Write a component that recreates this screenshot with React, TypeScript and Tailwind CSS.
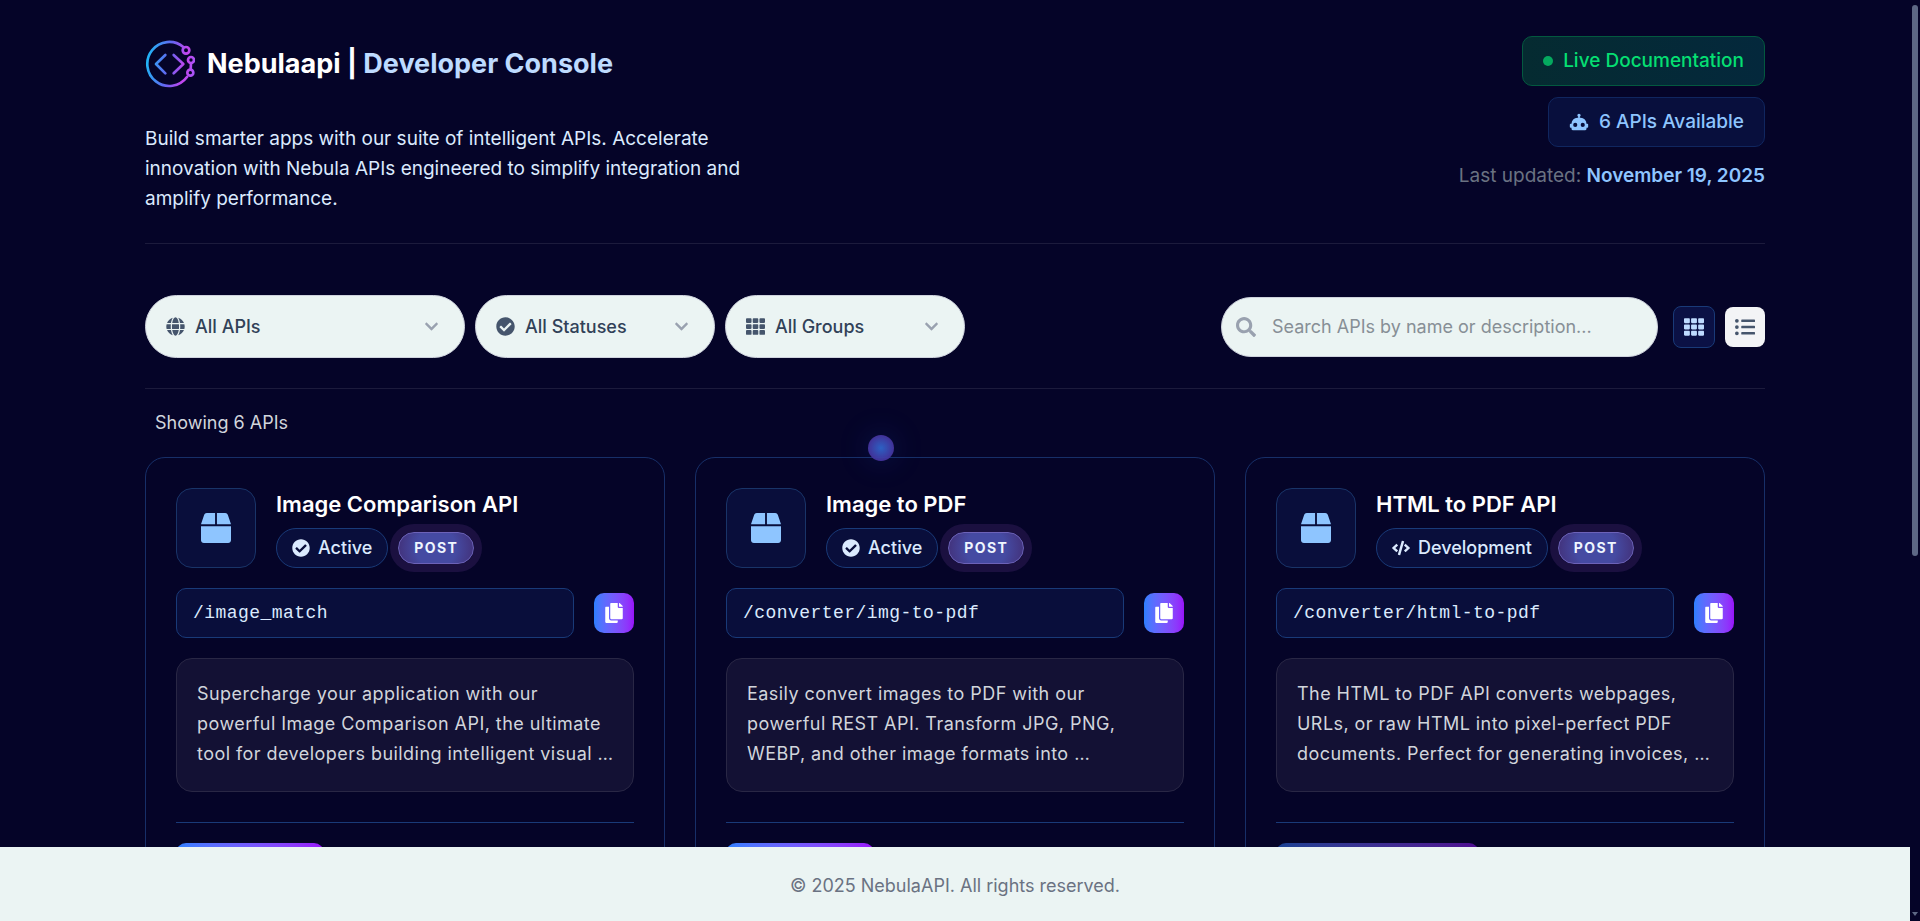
import type { IconType } from 'react-icons'
import {
  FaBox,
  FaCheckCircle,
  FaChevronDown,
  FaCode,
  FaCopy,
  FaGlobe,
  FaListUl,
  FaSearch,
  FaTh,
} from 'react-icons/fa'

type Api = {
  name: string
  status: 'Active' | 'Development'
  method: string
  endpoint: string
  description: string
}

type Filter = {
  id: string
  label: string
  icon: IconType
  width: string
}

const filters: Filter[] = [
  { id: 'api', label: 'All APIs', icon: FaGlobe, width: 'w-80' },
  { id: 'status', label: 'All Statuses', icon: FaCheckCircle, width: 'w-60' },
  { id: 'group', label: 'All Groups', icon: FaTh, width: 'w-60' },
]

const apis: Api[] = [
  {
    name: 'Image Comparison API',
    status: 'Active',
    method: 'POST',
    endpoint: '/image_match',
    description:
      'Supercharge your application with our powerful Image Comparison API, the ultimate tool for developers building intelligent visual …',
  },
  {
    name: 'Image to PDF',
    status: 'Active',
    method: 'POST',
    endpoint: '/converter/img-to-pdf',
    description:
      'Easily convert images to PDF with our powerful REST API. Transform JPG, PNG, WEBP, and other image formats into …',
  },
  {
    name: 'HTML to PDF API',
    status: 'Development',
    method: 'POST',
    endpoint: '/converter/html-to-pdf',
    description:
      'The HTML to PDF API converts webpages, URLs, or raw HTML into pixel-perfect PDF documents. Perfect for generating invoices, …',
  },
]

function Logo() {
  return (
    <svg
      viewBox="0 0 150 150"
      className="size-[50px] shrink-0"
      fill="none"
      stroke="url(#logo-gradient)"
      strokeWidth="8"
      strokeLinecap="round"
      strokeLinejoin="round"
      aria-hidden="true"
    >
      <defs>
        <linearGradient
          id="logo-gradient"
          gradientUnits="userSpaceOnUse"
          x1="5"
          y1="60"
          x2="150"
          y2="85"
        >
          <stop offset="0" stopColor="#1fb6f6" />
          <stop offset="0.45" stopColor="#6366f1" />
          <stop offset="0.8" stopColor="#c445ee" />
          <stop offset="1" stopColor="#a855f7" />
        </linearGradient>
      </defs>
      <path d="M115 24A66 66 0 1 0 126 114" />
      <circle cx="123" cy="34" r="10" />
      <circle cx="138" cy="63" r="9" />
      <circle cx="136" cy="101" r="9" />
      <path d="M138 73L137 91" />
      <path d="M61 48L33 75L61 103" />
      <path d="M86 48L115 75L86 103" />
    </svg>
  )
}

function RobotIcon() {
  return (
    <svg
      viewBox="0 0 24 24"
      className="size-5"
      fill="currentColor"
      aria-hidden="true"
    >
      <path d="M12 2a2 2 0 0 1 2 2c0 .74-.4 1.39-1 1.73V7h1a7 7 0 0 1 7 7h1a1 1 0 0 1 1 1v3a1 1 0 0 1-1 1h-1v1a2 2 0 0 1-2 2H5a2 2 0 0 1-2-2v-1H2a1 1 0 0 1-1-1v-3a1 1 0 0 1 1-1h1a7 7 0 0 1 7-7h1V5.73c-.6-.34-1-.99-1-1.73a2 2 0 0 1 2-2M7.5 13A2.5 2.5 0 0 0 5 15.5 2.5 2.5 0 0 0 7.5 18a2.5 2.5 0 0 0 2.5-2.5A2.5 2.5 0 0 0 7.5 13m9 0a2.5 2.5 0 0 0-2.5 2.5 2.5 2.5 0 0 0 2.5 2.5 2.5 2.5 0 0 0 2.5-2.5 2.5 2.5 0 0 0-2.5-2.5" />
    </svg>
  )
}

function Header() {
  return (
    <header className="flex items-start justify-between border-b border-[#1c1b3c] pt-9 pb-[29px]">
      <div>
        <div className="flex h-14 items-center gap-3">
          <Logo />
          <h1 className="text-[27px] font-bold text-white">
            Nebulaapi | <span className="text-blue-200">Developer Console</span>
          </h1>
        </div>
        <p className="mt-8 max-w-[620px] text-[19px] leading-[30px] text-blue-100">
          Build smarter apps with our suite of intelligent APIs. Accelerate
          innovation with Nebula APIs engineered to simplify integration and
          amplify performance.
        </p>
      </div>

      <div className="flex flex-col items-end gap-[11px] text-[19px]">
        <div className="flex h-[50px] items-center gap-[10px] rounded-[10px] border border-[#03593f] bg-linear-to-r from-[#052b31] to-[#04283c] px-5 font-medium text-[#05df72]">
          <span className="size-[10px] rounded-full bg-[#05a95f]" />
          Live Documentation
        </div>
        <div className="flex h-[50px] items-center gap-[10px] rounded-[10px] border border-[#10265f] bg-[#080f3d] px-5 font-medium text-[#8ec5ff]">
          <RobotIcon />6 APIs Available
        </div>
        <p className="mt-1 leading-7 text-[#6a7282]">
          Last updated:{' '}
          <span className="font-semibold text-[#8ec5ff]">
            November 19, 2025
          </span>
        </p>
      </div>
    </header>
  )
}

function FilterSelect({ filter }: { filter: Filter }) {
  const Icon = filter.icon
  return (
    <div className={`relative ${filter.width}`}>
      <Icon
        size={19}
        className="pointer-events-none absolute top-[22px] left-[21px] text-slate-600"
      />
      <select
        aria-label={filter.label}
        className="h-[63px] w-full appearance-none rounded-[32px] border border-[#cfd3dd] bg-[#ebf4f3] pr-12 pl-[49px] text-lg font-medium text-slate-700"
      >
        <option>{filter.label}</option>
      </select>
      <FaChevronDown
        size={15}
        className="pointer-events-none absolute top-[24px] right-[26px] text-gray-400"
      />
    </div>
  )
}

function Toolbar() {
  return (
    <div className="flex items-center justify-between border-b border-[#1c1b3c] pt-[51px] pb-[30px]">
      <div className="flex gap-[10px]">
        {filters.map((filter) => (
          <FilterSelect key={filter.id} filter={filter} />
        ))}
      </div>

      <div className="flex items-center">
        <div className="relative mr-[15px]">
          <FaSearch
            size={20}
            className="pointer-events-none absolute top-5 left-[15px] text-gray-400"
          />
          <input
            type="text"
            aria-label="Search APIs"
            placeholder="Search APIs by name or description..."
            className="h-[60px] w-[437px] rounded-[30px] border border-[#cfd3dd] bg-[#ebf4f3] pr-5 pl-[50px] text-lg text-slate-700 placeholder:text-[#878f96]"
          />
        </div>
        <button
          type="button"
          aria-label="Grid view"
          className="mr-[10px] flex size-[42px] items-center justify-center rounded-lg border border-[#193a78] bg-[#0b1145] text-blue-200"
        >
          <FaTh size={20} />
        </button>
        <button
          type="button"
          aria-label="List view"
          className="flex size-10 items-center justify-center rounded-lg bg-gray-100 text-slate-600"
        >
          <FaListUl size={20} />
        </button>
      </div>
    </div>
  )
}

function ApiCard({ api }: { api: Api }) {
  const active = api.status === 'Active'
  const StatusIcon = active ? FaCheckCircle : FaCode
  return (
    <article className="rounded-[20px] border border-[#172f68] p-[30px]">
      <div className="flex gap-5">
        <div className="flex size-20 shrink-0 items-center justify-center rounded-2xl border border-[#193468] bg-[#090e3b] text-[#8ec5ff]">
          <FaBox size={30} />
        </div>
        <div className="flex flex-col justify-between">
          <h2 className="text-[22px] leading-8 font-semibold text-white">
            {api.name}
          </h2>
          <div className="flex items-center gap-[10px]">
            <span className="flex h-10 items-center gap-2 rounded-full border border-[#193a78] bg-[#090e3b] px-[15px] text-lg font-medium text-blue-100">
              <StatusIcon size={18} />
              {api.status}
            </span>
            <span className="flex h-8 items-center rounded-full border border-[#6c62b8] bg-[radial-gradient(circle,#454aa2_50%,#423078_100%)] px-[15px] text-sm font-bold tracking-widest text-blue-50 shadow-[0_0_0_8px_#1b1040]">
              {api.method}
            </span>
          </div>
        </div>
      </div>

      <div className="mt-5 flex items-center gap-5">
        <code className="flex h-[50px] flex-1 items-center rounded-[10px] border border-[#193a78] bg-[#090e3b] px-4 font-['Liberation_Mono',monospace] text-lg tracking-wide text-blue-100">
          {api.endpoint}
        </code>
        <button
          type="button"
          aria-label="Copy endpoint"
          className="flex size-10 items-center justify-center rounded-[10px] bg-linear-to-r from-[#2b7fff] to-[#9810fa] text-white"
        >
          <FaCopy size={20} />
        </button>
      </div>

      <p className="mt-5 rounded-2xl border border-[#292745] bg-[#131134] pt-5 pr-4 pb-[22px] pl-5 text-lg leading-[30px] tracking-wide text-gray-300">
        {api.description}
      </p>

      <div className="mt-[30px] border-t border-[#193a78] pt-5">
        <button
          type="button"
          disabled={!active}
          aria-label={`Open ${api.name}`}
          className={`h-[50px] rounded-[10px] bg-linear-to-r from-[#2b7fff] to-[#9810fa] disabled:opacity-50 ${
            active ? 'w-[148px]' : 'w-[203px]'
          }`}
        />
      </div>
    </article>
  )
}

function Scrollbar() {
  return (
    <div
      className="flex w-[10px] shrink-0 flex-col items-center justify-between bg-[#050428] py-[5px]"
      aria-hidden="true"
    >
      <div className="h-[60.5%] w-[6px] rounded-sm bg-[#5d6885]" />
      <svg viewBox="0 0 6 4" className="h-1 w-[6px]" fill="#5d6885">
        <path d="M0 0h6L3 4z" />
      </svg>
    </div>
  )
}

export default function App() {
  return (
    <div className="flex h-screen overflow-hidden bg-[#050428] font-['Inter',sans-serif]">
      <div className="flex min-w-0 flex-1 flex-col">
        <main className="min-h-0 flex-1 overflow-y-auto [scrollbar-width:none]">
          <div className="relative mx-auto max-w-[1620px]">
            <Header />
            <Toolbar />
            <p className="px-[10px] py-5 text-lg leading-7 text-gray-300">
              Showing 6 APIs
            </p>
            <div className="grid grid-cols-3 gap-[30px]">
              {apis.map((api) => (
                <ApiCard key={api.endpoint} api={api} />
              ))}
            </div>

            {/* cursor glow */}
            <div className="pointer-events-none absolute top-[435px] left-[723px] size-[26px] rounded-full bg-[radial-gradient(circle,#2f66cc_0%,#46309b_75%)] opacity-95 shadow-[0_0_30px_4px_#2b7fff22]" />
          </div>
        </main>
        <footer className="flex h-[74px] shrink-0 items-center justify-center bg-[#ebf4f3] pt-1 text-lg text-gray-500">
          <p>© 2025 NebulaAPI. All rights reserved.</p>
        </footer>
      </div>
      <Scrollbar />
    </div>
  )
}
